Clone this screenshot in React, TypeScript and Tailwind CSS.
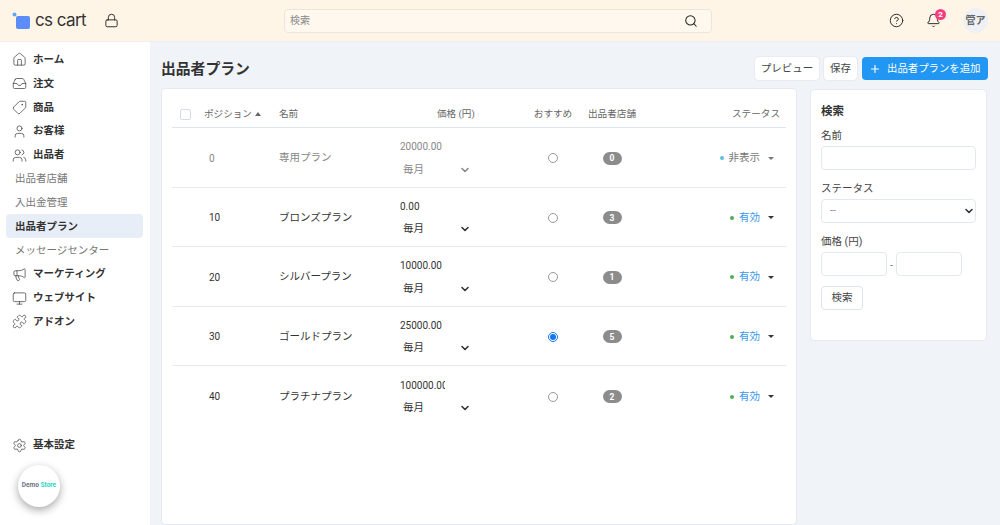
import {
  Bell,
  ChevronDown,
  CircleHelp,
  House,
  Inbox,
  Lock,
  Megaphone,
  Monitor,
  Plus,
  Puzzle,
  Search,
  Settings,
  Tag,
  User,
  Users,
} from "lucide-react";

const font = "font-['Roboto','Noto_Sans_CJK_JP',sans-serif]";

const plans = [
  { pos: "0", name: "専用プラン", price: "20000.00", vendors: "0", hidden: true, checked: false },
  { pos: "10", name: "ブロンズプラン", price: "0.00", vendors: "3", hidden: false, checked: false },
  { pos: "20", name: "シルバープラン", price: "10000.00", vendors: "1", hidden: false, checked: false },
  { pos: "30", name: "ゴールドプラン", price: "25000.00", vendors: "5", hidden: false, checked: true },
  { pos: "40", name: "プラチナプラン", price: "100000.00", vendors: "2", hidden: false, checked: false },
];

function NavItem({ icon: Icon, label, flip }: { icon: typeof House; label: string; flip?: boolean }) {
  return (
    <div className="flex h-[23.8px] items-center pl-[12px] pt-[2px]">
      <Icon className={`h-[15px] w-[15px] text-[#444] ${flip ? "-scale-x-100" : ""}`} strokeWidth={1.2} />
      <span className="ml-[6px] text-[10.5px] font-bold text-[#333]">{label}</span>
    </div>
  );
}

function SubItem({ label, active }: { label: string; active?: boolean }) {
  return (
    <div
      className={
        active
          ? "ml-[6px] mr-[7px] flex h-[24px] items-center rounded-[4px] bg-[#e8eef7] pl-[9px] pt-[2px] text-[10.5px] font-bold text-[#333]"
          : "ml-[6px] mr-[7px] flex h-[23.8px] items-center pl-[9px] pt-[2px] text-[10.5px] text-[#777]"
      }
    >
      {label}
    </div>
  );
}

function Sidebar() {
  return (
    <aside className="flex w-[150px] shrink-0 flex-col bg-white pt-[5px]">
      <NavItem icon={House} label="ホーム" />
      <NavItem icon={Inbox} label="注文" />
      <NavItem icon={Tag} label="商品" flip />
      <NavItem icon={User} label="お客様" />
      <NavItem icon={Users} label="出品者" />
      <SubItem label="出品者店舗" />
      <SubItem label="入出金管理" />
      <SubItem label="出品者プラン" active />
      <SubItem label="メッセージセンター" />
      <NavItem icon={Megaphone} label="マーケティング" />
      <NavItem icon={Monitor} label="ウェブサイト" />
      <NavItem icon={Puzzle} label="アドオン" />
      <div className="mt-auto">
        <NavItem icon={Settings} label="基本設定" />
        <div className="mb-[18px] ml-[18px] mt-[9px] flex h-[42px] w-[42px] items-center justify-center rounded-full bg-white shadow-[0_3px_8px_rgba(0,0,0,0.35)]">
          <span className="text-[6.5px] font-bold text-[#6b7280]">
            Demo <span className="text-[#2dd4bf]">Store</span>
          </span>
        </div>
      </div>
    </aside>
  );
}

function Header() {
  return (
    <header className="flex h-[42px] shrink-0 items-center border-b border-[#eceff5] bg-[#fff5e6]">
      <div className="flex w-[284px] items-center pl-[12px]">
        <svg width="20" height="18" viewBox="0 0 20 18" className="shrink-0">
          <circle cx="2.5" cy="2.5" r="2" fill="#60a5fa" />
          <rect x="4" y="4" width="14" height="13" rx="2" fill="#5b8cf8" />
        </svg>
        <span className="ml-[3px] font-['Inter'] text-[17px] leading-none tracking-[-0.6px] text-[#333]">cs cart</span>
        <Lock className="ml-[18px] h-[15px] w-[15px] text-[#333]" strokeWidth={1.6} />
      </div>
      <div className="flex h-[24px] w-[428px] items-center rounded-[4px] border border-[#ebe6dc] bg-[#fff8ee] pl-[5px] pr-[13px]">
        <input
          placeholder="検索"
          className="min-w-0 flex-1 bg-transparent text-[10px] outline-none placeholder:text-[#888]"
        />
        <Search className="h-[14px] w-[14px] text-[#222]" strokeWidth={1.75} />
      </div>
      <div className="ml-auto flex items-center pr-[12px]">
        <CircleHelp className="h-[15px] w-[15px] text-[#222]" strokeWidth={1.5} />
        <div className="relative ml-[22px]">
          <Bell className="h-[15px] w-[15px] text-[#222]" strokeWidth={1.5} />
          <span className="absolute -right-[5px] -top-[4px] flex h-[11px] w-[11px] items-center justify-center rounded-full bg-[#f43f7f] text-[8px] font-bold leading-none text-white">
            2
          </span>
        </div>
        <div className="ml-[22px] flex h-[25px] w-[25px] items-center justify-center rounded-full bg-[#eef0f6] text-[10px] font-bold text-[#666]">
          管ア
        </div>
      </div>
    </header>
  );
}

const tableCols = "grid grid-cols-[32px_75px_121px_125px_56px_62px_143px]";

function PlanRow({ plan, last }: { plan: (typeof plans)[number]; last: boolean }) {
  return (
    <div
      className={`${tableCols} h-[59.5px] items-center pt-[2px] text-[10.5px] ${
        plan.hidden ? "text-[#888]" : "text-[#333]"
      } ${last ? "" : "border-b border-[#e6e9f2]"}`}
    >
      <div />
      <div className="pl-[5px] text-[10px]">{plan.pos}</div>
      <div>{plan.name}</div>
      <div className="flex flex-col pt-[3px]">
        <input
          readOnly
          value={plan.price}
          className="h-[18px] w-[45px] bg-transparent text-[10px] outline-none"
        />
        <div className="relative mt-[2px] w-[72px]">
          <select className="h-[24px] w-full appearance-none bg-transparent pl-[3px] text-[10.5px] outline-none">
            <option>毎月</option>
          </select>
          <ChevronDown className="pointer-events-none absolute right-[1px] top-[6px] h-[12px] w-[12px]" strokeWidth={3.2} />
        </div>
      </div>
      <div className="flex justify-center">
        <input
          type="radio"
          readOnly
          checked={plan.checked}
          className={`h-[10px] w-[10px] accent-[#1a73e8] ${plan.checked ? "" : "opacity-75"}`}
        />
      </div>
      <div className="flex justify-center">
        <span className="flex h-[13px] w-[19px] items-center justify-center rounded-full bg-[#8c8c8c] text-[8.5px] font-bold leading-none text-white">
          {plan.vendors}
        </span>
      </div>
      <div className="flex items-center justify-end pr-[12px]">
        <span
          className={
            plan.hidden
              ? "h-[4px] w-[4px] rounded-full bg-[#5bc0de]"
              : "h-[4px] w-[4px] rounded-full bg-[#4caf50]"
          }
        />
        <span className={plan.hidden ? "ml-[5px] text-[#777]" : "ml-[5px] text-[#3b99f0]"}>
          {plan.hidden ? "非表示" : "有効"}
        </span>
        <span
          className={`ml-[8px] h-0 w-0 border-x-[3px] border-t-[3.5px] border-x-transparent ${
            plan.hidden ? "border-t-[#777]" : "border-t-[#333]"
          }`}
        />
      </div>
    </div>
  );
}

function PlanTable() {
  return (
    <section className="h-[437px] w-[636px] shrink-0 rounded-[4px] border border-[#e6e9f2] bg-white px-[10px]">
      <div className={`${tableCols} h-[39px] items-center border-b border-[#dfe3ee] pt-[13px] text-[9.6px] text-[#666]`}>
        <div>
          <span className="ml-[8px] block h-[11px] w-[11px] rounded-[2px] border border-[#d5dbe8]" />
        </div>
        <div className="flex items-center">
          ポジション
          <span className="ml-[3px] h-0 w-0 border-x-[3.5px] border-b-[4px] border-x-transparent border-b-[#666]" />
        </div>
        <div>名前</div>
        <div className="pl-[37px]">価格 (円)</div>
        <div className="text-center">おすすめ</div>
        <div className="text-center">出品者店舗</div>
        <div className="pr-[6px] text-right">ステータス</div>
      </div>
      {plans.map((plan, i) => (
        <PlanRow key={plan.pos} plan={plan} last={i === plans.length - 1} />
      ))}
    </section>
  );
}

const fieldClass = "block h-[24px] rounded-[4px] border border-[#e3e7f1] bg-white outline-none";
const labelClass = "mt-[10px] block h-[16px] leading-[18px]";

function SearchPanel() {
  return (
    <section className="mt-[1px] h-[252px] w-[177px] shrink-0 rounded-[4px] border border-[#e6e9f2] bg-white px-[10px] pt-[12px] text-[10.5px] text-[#444]">
      <h2 className="h-[16px] text-[11.5px] font-bold leading-[18px] text-[#333]">検索</h2>
      <label className="mt-[9px] block h-[16px] leading-[18px]">名前</label>
      <input className={`${fieldClass} mt-[3px] w-[155px]`} />
      <label className={labelClass}>ステータス</label>
      <div className="relative mt-[3px] w-[155px]">
        <select className={`${fieldClass} w-full appearance-none pl-[8px] text-[10.5px] text-[#888]`}>
          <option>--</option>
        </select>
        <ChevronDown className="pointer-events-none absolute right-[1px] top-[6px] h-[12px] w-[12px] text-[#333]" strokeWidth={3.2} />
      </div>
      <label className={labelClass}>価格 (円)</label>
      <div className="mt-[3px] flex items-center">
        <input className={`${fieldClass} w-[66px]`} />
        <span className="mt-[3px] w-[9px] text-center text-[#777]">-</span>
        <input className={`${fieldClass} w-[66px]`} />
      </div>
      <button className="mt-[10px] h-[24px] w-[42px] rounded-[4px] border border-[#dfe3ee] bg-white text-[10.5px] text-[#444]">
        検索
      </button>
    </section>
  );
}

export default function App() {
  return (
    <div className={`${font} flex h-screen flex-col overflow-hidden bg-[#f0f4f8]`}>
      <Header />
      <div className="flex min-h-0 flex-1">
        <Sidebar />
        <main className="min-w-0 flex-1 pl-[11px] pr-[12px] pt-[15px]">
          <div className="flex h-[23px] items-center">
            <h1 className="pt-[2px] text-[14.8px] font-bold text-[#333]">出品者プラン</h1>
            <div className="ml-auto flex gap-[5px] text-[10.5px] text-[#444]">
              <button className="h-[23px] w-[64px] rounded-[4px] bg-white pt-[1px] shadow-[0_0_2px_rgba(0,0,0,0.12)]">プレビュー</button>
              <button className="h-[23px] w-[33px] rounded-[4px] bg-white pt-[1px] shadow-[0_0_2px_rgba(0,0,0,0.12)]">保存</button>
              <button className="flex h-[23px] w-[126px] items-center rounded-[4px] bg-[#2196f3] pl-[7px] pt-[1px] text-[10.4px] text-white">
                <Plus className="mr-[6px] h-[12px] w-[12px]" strokeWidth={2.25} />
                出品者プランを追加
              </button>
            </div>
          </div>
          <div className="mt-[8px] flex gap-[13px]">
            <PlanTable />
            <SearchPanel />
          </div>
        </main>
      </div>
    </div>
  );
}
